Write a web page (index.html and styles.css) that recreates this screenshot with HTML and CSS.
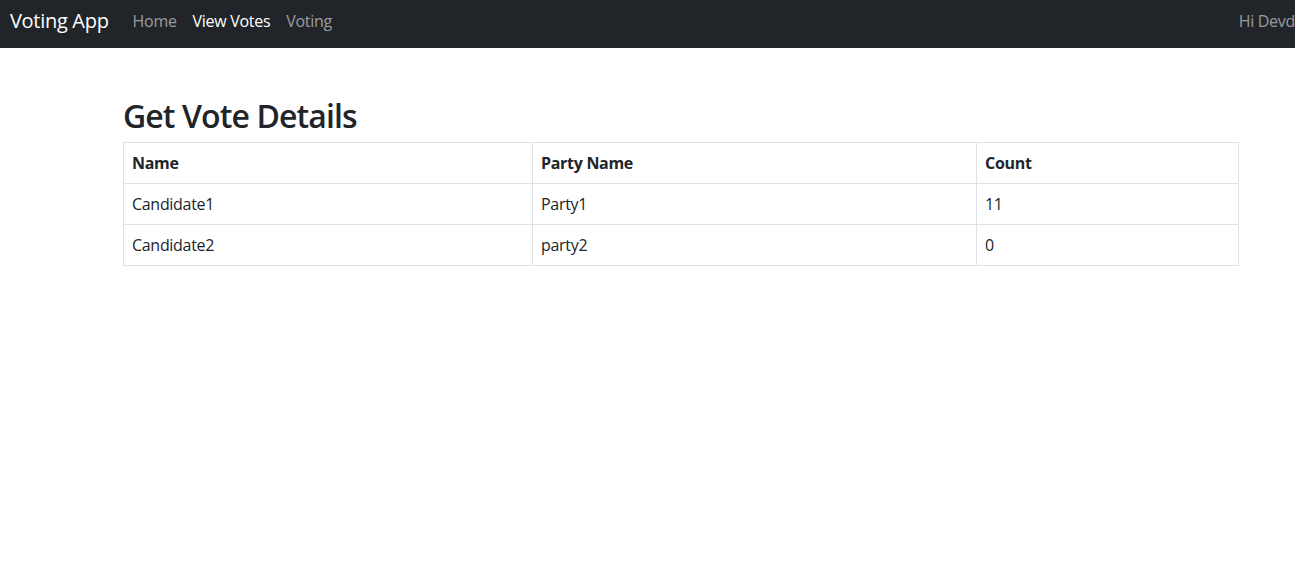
FILE: index.html
```html
<!DOCTYPE html>
<html>
<head>
<meta charset="utf-8">
<title>Voting App</title>
<link rel="stylesheet" href="styles.css">
</head>
<body>
<nav class="navbar">
  <a class="brand" href="#">Voting App</a>
  <ul class="nav-links">
    <li><a class="nav-link" href="#">Home</a></li>
    <li><a class="nav-link active" href="#">View Votes</a></li>
    <li><a class="nav-link" href="#">Voting</a></li>
  </ul>
  <span class="greeting">Hi Devd</span>
</nav>
<main class="container">
  <h2 class="title">Get Vote Details</h2>
  <table class="table">
    <colgroup>
      <col class="col-name">
      <col class="col-party">
      <col class="col-count">
    </colgroup>
    <thead>
      <tr><th>Name</th><th>Party Name</th><th>Count</th></tr>
    </thead>
    <tbody>
      <tr><td>Candidate1</td><td>Party1</td><td>11</td></tr>
      <tr><td>Candidate2</td><td>party2</td><td>0</td></tr>
    </tbody>
  </table>
</main>
</body>
</html>
```

FILE: styles.css
```css
html, body {
  margin: 0;
  padding: 0;
  overflow: hidden;
}
body {
  font-family: "Open Sans", "Noto Sans", sans-serif;
  font-size: 16px;
  line-height: 1.5;
  letter-spacing: -0.3px;
  color: #212529;
  background: #fff;
}
.navbar {
  display: flex;
  align-items: center;
  height: 48px;
  background: #212529;
  padding: 0 0 6px 10px;
  box-sizing: border-box;
  white-space: nowrap;
  overflow: hidden;
}
.brand {
  color: #fff;
  text-decoration: none;
  font-size: 20px;
  margin-right: 16px;
}
.nav-links {
  display: flex;
  list-style: none;
  margin: 0;
  padding: 0;
  flex: 1;
}
.nav-link {
  display: block;
  padding: 8px 8px;
  color: rgba(255,255,255,.55);
  text-decoration: none;
}
.nav-link.active {
  color: #fff;
}
.greeting {
  color: rgba(255,255,255,.55);
  margin-right: 0;
}
.container {
  padding: 49px 56px 0 123px;
}
.title {
  font-size: 32px;
  font-weight: 600;
  line-height: 1.2;
  margin: 0 0 7px 0;
  letter-spacing: -0.9px;
}
.table {
  width: 100%;
  border-collapse: collapse;
  border: 1px solid #dee2e6;
}
.col-name { width: 409px; }
.col-party { width: 444px; }
.table th, .table td {
  border: 1px solid #dee2e6;
  padding: 8px 8px;
  text-align: left;
  height: 24px;
}
.table th {
  font-weight: 700;
}
```
